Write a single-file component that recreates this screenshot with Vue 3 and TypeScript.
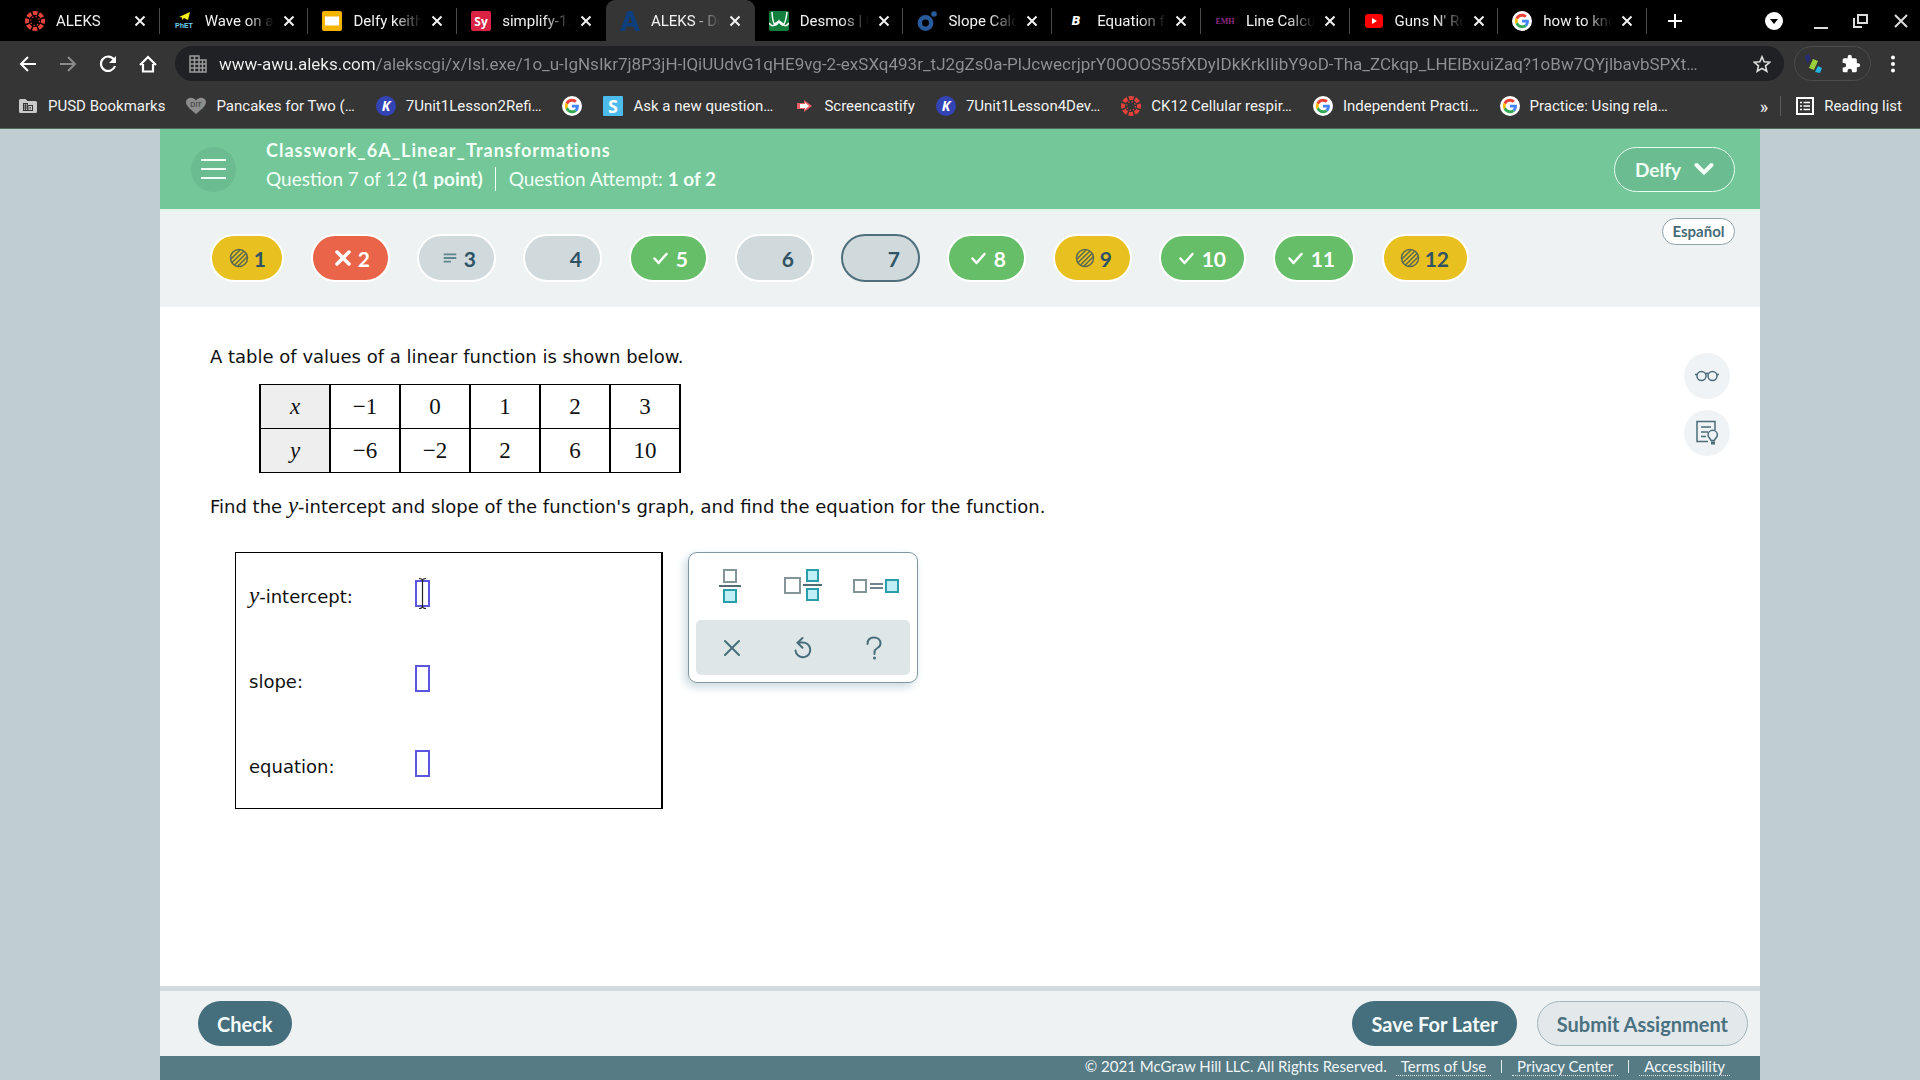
<script setup lang="ts">
import { ref } from 'vue'

interface Tab { icon: string; title: string; active?: boolean }
interface Bookmark { icon: string; title?: string }
type Status = 'partial' | 'wrong' | 'draft' | 'blank' | 'right' | 'current'
interface Question { n: number; status: Status; size: string }

const tabs: Tab[] = [
  { icon: 'canvas', title: 'ALEKS' },
  { icon: 'phet', title: 'Wave on a' },
  { icon: 'slides', title: 'Delfy keith' },
  { icon: 'sy', title: 'simplify-1.' },
  { icon: 'aleks', title: 'ALEKS - Do', active: true },
  { icon: 'desmos', title: 'Desmos | G' },
  { icon: 'omni', title: 'Slope Calc' },
  { icon: 'byjus', title: 'Equation f' },
  { icon: 'emh', title: 'Line Calcu' },
  { icon: 'youtube', title: "Guns N' Ro" },
  { icon: 'google', title: 'how to kno' },
]

const bookmarks: Bookmark[] = [
  { icon: 'folder', title: 'PUSD Bookmarks' },
  { icon: 'heart', title: 'Pancakes for Two (…' },
  { icon: 'kami', title: '7Unit1Lesson2Refi…' },
  { icon: 'google' },
  { icon: 'socratic', title: 'Ask a new question…' },
  { icon: 'screencastify', title: 'Screencastify' },
  { icon: 'kami', title: '7Unit1Lesson4Dev…' },
  { icon: 'canvas', title: 'CK12 Cellular respir…' },
  { icon: 'google', title: 'Independent Practi…' },
  { icon: 'google', title: 'Practice: Using rela…' },
]

const questions: Question[] = [
  { n: 1, status: 'partial', size: 'slim' },
  { n: 2, status: 'wrong', size: 'single' },
  { n: 3, status: 'draft', size: 'single' },
  { n: 4, status: 'blank', size: 'single' },
  { n: 5, status: 'right', size: 'single' },
  { n: 6, status: 'blank', size: 'single' },
  { n: 7, status: 'current', size: 'single' },
  { n: 8, status: 'right', size: 'single' },
  { n: 9, status: 'partial', size: 'single' },
  { n: 10, status: 'right', size: 'double' },
  { n: 11, status: 'right', size: 'medium' },
  { n: 12, status: 'partial', size: 'double' },
]

const rows = [
  { name: 'x', values: ['−1', '0', '1', '2', '3'] },
  { name: 'y', values: ['−6', '−2', '2', '6', '10'] },
]

const url = ref('www-awu.aleks.com/alekscgi/x/Isl.exe/1o_u-IgNsIkr7j8P3jH-lQiUUdvG1qHE9vg-2-exSXq493r_tJ2gZs0a-PlJcwecrjprY0OOOS55fXDyIDkKrkIIibY9oD-Tha_ZCkqp_LHElBxuiZaq?1oBw7QYjlbavbSPXt…')
const intercept = ref('')
const slope = ref('')
const equation = ref('')
</script>

<template>
  <svg class="sprite" aria-hidden="true">
    <symbol id="i-canvas" viewBox="0 0 20 20">
      <circle cx="10" cy="10" r="8" fill="none" stroke="#e3413a" stroke-width="4" stroke-dasharray="4.7 1.58" stroke-dashoffset="2.35" />
      <circle cx="10" cy="10" r="4.4" fill="none" stroke="#e3413a" stroke-width="1.4" stroke-dasharray="1.3 2.155" />
    </symbol>
    <symbol id="i-phet" viewBox="0 0 20 20">
      <path d="M5 6 16 1l-2 8-4-2-2 2V6.500z" fill="#f6ee1d" />
      <text x="1" y="17" font-family="Liberation Sans, sans-serif" font-size="7" font-weight="700" fill="#6fd0f5">PhET</text>
    </symbol>
    <symbol id="i-slides" viewBox="0 0 20 20">
      <rect width="20" height="20" rx="2" fill="#f4b400" /><rect x="3" y="5.500" width="14" height="9" fill="#fff" />
    </symbol>
    <symbol id="i-sy" viewBox="0 0 20 20">
      <rect width="20" height="20" rx="2" fill="#db2144" />
      <text x="10" y="14.500" text-anchor="middle" font-family="Open Sans, sans-serif" font-size="12" font-weight="700" fill="#fff">Sy</text>
    </symbol>
    <symbol id="i-aleks" viewBox="0 0 20 20">
      <path d="M0 20 7.500 0h5L20 20h-5l-1.500-4.500h-7L5 20zM8 12h4l-2-6.500z" fill="#0e3f7c" />
    </symbol>
    <symbol id="i-desmos" viewBox="0 0 20 20">
      <rect width="20" height="20" rx="2" fill="#12803c" />
      <path d="M0 12c3 4 5 3 7 0 2-2 4-2 6 0 2 3 4 4 7 0M3 1c1 17 5 14 7 9 2 5 6 8 8-9" fill="none" stroke="#fff" stroke-width="1.500" />
    </symbol>
    <symbol id="i-omni" viewBox="0 0 20 20">
      <circle cx="8.500" cy="12" r="5.700" fill="none" stroke="#285a9c" stroke-width="4.500" /><circle cx="17" cy="3" r="2.800" fill="#285a9c" />
    </symbol>
    <symbol id="i-byjus" viewBox="0 0 20 20">
      <text x="10" y="14" text-anchor="middle" font-family="DejaVu Sans, sans-serif" font-size="12" font-weight="700" font-style="italic" fill="#fff">B</text>
    </symbol>
    <symbol id="i-emh" viewBox="0 0 20 20">
      <text x="10" y="13" text-anchor="middle" font-family="Liberation Serif, serif" font-size="8" font-weight="700" fill="#8b2a80">EMH</text>
    </symbol>
    <symbol id="i-youtube" viewBox="0 0 20 20">
      <rect x="1" y="3" width="18" height="14" rx="3" fill="#f00" /><path d="M8 7v6l5-3z" fill="#fff" />
    </symbol>
    <symbol id="i-google" viewBox="0 0 20 20">
      <circle cx="10" cy="10" r="10" fill="#fff" />
      <g transform="translate(2.800 2.800) scale(.3)">
        <path fill="#ea4335" d="M24 9.500c3.540 0 6.710 1.220 9.210 3.600l6.850-6.850C35.900 2.380 30.470 0 24 0 14.620 0 6.510 5.380 2.560 13.220l7.980 6.190C12.430 13.720 17.740 9.500 24 9.500z" />
        <path fill="#4285f4" d="M46.980 24.550c0-1.570-.15-3.090-.38-4.550H24v9.020h12.940c-.58 2.960-2.260 5.480-4.780 7.180l7.730 6c4.510-4.180 7.090-10.360 7.090-17.650z" />
        <path fill="#fbbc05" d="M10.530 28.590c-.48-1.450-.76-2.990-.76-4.590s.27-3.140.76-4.590l-7.980-6.190C.92 16.460 0 20.120 0 24c0 3.880.92 7.540 2.560 10.780z" />
        <path fill="#34a853" d="M24 48c6.480 0 11.930-2.130 15.890-5.810l-7.730-6c-2.150 1.450-4.920 2.300-8.160 2.300-6.260 0-11.570-4.220-13.470-9.910l-7.980 6.190C6.510 42.620 14.620 48 24 48z" />
      </g>
    </symbol>
    <symbol id="i-folder" viewBox="0 0 20 20">
      <path d="M1 4.500A1.500 1.500 0 0 1 2.500 3h5l2 2h8A1.500 1.500 0 0 1 19 6.500v9a1.500 1.500 0 0 1-1.500 1.500h-15A1.500 1.500 0 0 1 1 15.500z" fill="#c9c9c9" />
      <path d="M5 7h5v2h5v6H5z" fill="#353535" />
      <path d="M6 8.200h1.200v1.200H6zM8 8.200h1.200v1.200H8zM6 10.400h1.200v1.200H6zM8 10.400h1.200v1.200H8zM6 12.600h1.200v1.200H6zM8 12.600h1.200v1.200H8zM10.500 10h3.500v4h-3.500z" fill="#c9c9c9" />
      <path d="M11.500 11h1.500v.8h-1.500zM11.500 12.500h1.500v.8h-1.500z" fill="#353535" />
    </symbol>
    <symbol id="i-heart" viewBox="0 0 20 20">
      <path d="M10 18C6 14.500 0 10.500 0 6c0-5 7.500-6 10-1.500C12.500 0 20 1 20 6c0 4.500-6 8.500-10 12z" fill="#8c8c8c" />
      <text x="10" y="10.500" text-anchor="middle" font-family="Liberation Sans, sans-serif" font-size="7" font-weight="700" fill="#4d4d4d">DIT</text>
    </symbol>
    <symbol id="i-kami" viewBox="0 0 20 20">
      <circle cx="10" cy="10" r="10" fill="#3444b4" />
      <text x="10" y="15" text-anchor="middle" font-family="Open Sans, sans-serif" font-size="14" font-weight="700" font-style="italic" fill="#fff">K</text>
    </symbol>
    <symbol id="i-socratic" viewBox="0 0 20 20">
      <rect width="20" height="20" rx="1" fill="#4cbcec" />
      <text x="10" y="16.500" text-anchor="middle" font-family="Open Sans, sans-serif" font-size="18" font-weight="700" fill="#fff">S</text>
    </symbol>
    <symbol id="i-screencastify" viewBox="0 0 20 20">
      <path d="M3 7h7V4l8 6-8 6v-3H3z" fill="#ef5f66" /><path d="M6 8h5V6.500l4 3.500-4 3.500V12H6z" fill="#fff" />
    </symbol>
    <symbol id="i-close" viewBox="0 0 12 12"><path d="m1.500 1.500 9 9m0-9-9 9" stroke="currentColor" stroke-width="2" /></symbol>
    <symbol id="i-partial" viewBox="0 0 20 20">
      <circle cx="10" cy="10" r="8.500" fill="none" stroke="#5b6a52" stroke-width="1.500" />
      <path d="m2 11 9-9M2.500 15 15 3M5 17.500 17.500 5M8.500 18.500l10-10" stroke="#5b6a52" stroke-width="1.500" />
    </symbol>
    <symbol id="i-wrong" viewBox="0 0 20 20"><path d="m4 4 12 12m0-12L4 16" stroke="#fff" stroke-width="3.500" stroke-linecap="round" /></symbol>
    <symbol id="i-draft" viewBox="0 0 20 20"><path d="M3 6h14M3 10h14M3 14h8" stroke="#5f8790" stroke-width="2" /></symbol>
    <symbol id="i-right" viewBox="0 0 20 20"><path d="m3.500 10.500 4 4.500 8-9" fill="none" stroke="#fff" stroke-width="2.500" stroke-linecap="round" stroke-linejoin="round" /></symbol>
  </svg>

  <div class="window">
    <header class="chrome">
      <div class="strip">
        <nav class="tabs" aria-label="Tabs">
          <div v-for="(t, i) in tabs" :key="i" class="tab" :class="{ active: t.active, before: tabs[i + 1]?.active }">
            <svg class="fav"><use :href="'#i-' + t.icon" /></svg>
            <span class="tab-title">{{ t.title }}</span>
            <button class="tab-close" aria-label="Close tab"><svg><use href="#i-close" /></svg></button>
          </div>
        </nav>
        <div class="controls">
          <button class="plus" aria-label="New tab"><svg width="16" height="16" viewBox="0 0 16 16"><path d="M8 1v14M1 8h14" stroke="#fff" stroke-width="2" /></svg></button>
          <button class="search" aria-label="Search tabs"><svg width="18" height="18" viewBox="0 0 18 18"><circle cx="9" cy="9" r="9" fill="#fff" /><path d="M5 7h8l-4 5z" fill="#000" /></svg></button>
          <button aria-label="Minimize"><svg width="16" height="16" viewBox="0 0 16 16"><path d="M1 15h14" stroke="#ddd" stroke-width="2" /></svg></button>
          <button aria-label="Restore"><svg width="16" height="16" viewBox="0 0 16 16"><path d="M5 2h9v8H5zM1 5v9h8" fill="none" stroke="#ddd" stroke-width="2" /></svg></button>
          <button aria-label="Close window"><svg width="16" height="16" viewBox="0 0 16 16"><path d="m2 2 12 12m0-12L2 14" stroke="#ddd" stroke-width="2" /></svg></button>
        </div>
      </div>

      <div class="toolbar">
        <button class="tool" aria-label="Back"><svg viewBox="0 0 20 20"><path d="M18 10H3m7-7-7 7 7 7" fill="none" stroke="#fff" stroke-width="2" /></svg></button>
        <button class="tool" aria-label="Forward"><svg viewBox="0 0 20 20"><path d="M2 10h15m-7-7 7 7-7 7" fill="none" stroke="#8a8a8a" stroke-width="2" /></svg></button>
        <button class="tool" aria-label="Reload"><svg viewBox="0 0 20 20"><path d="M16 5.500A7.200 7.200 0 1 0 17 12" fill="none" stroke="#fff" stroke-width="2.200" /><path d="M18 2v7h-7z" fill="#fff" /></svg></button>
        <button class="tool" aria-label="Home"><svg viewBox="0 0 20 20"><path d="M2 11 10 3l8 8m-13-1v7.500h10V10" fill="none" stroke="#fff" stroke-width="2.200" /></svg></button>
        <label class="address">
          <svg width="18" height="18" viewBox="0 0 18 18"><path d="M1 1h9v4h7v12H1z" fill="none" stroke="#9a9a9a" stroke-width="1.500" /><path d="M1 5h9M1 9h16M1 13h16M5.500 1v16M10 5v12M13.500 5v12" stroke="#9a9a9a" stroke-width="1.500" /></svg>
          <input v-model="url" class="url" type="text" aria-label="Address" spellcheck="false">
          <svg width="18" height="18" viewBox="0 0 20 20"><path d="m10 2 2.400 5.600 6.100.500-4.600 4 1.400 6L10 14.900l-5.300 3.200 1.400-6-4.600-4 6.100-.500z" fill="none" stroke="#ddd" stroke-width="1.800" /></svg>
        </label>
        <div class="extensions">
          <svg width="20" height="20" viewBox="0 0 20 20"><path d="m1 2 4-2 2 5-4 5z" fill="#2a2d74" /><path d="m9 5 5 2-4 9-5-2z" fill="#9bcf3c" /><path d="m14 12 4 2-2 5-5-1z" fill="#23b3e0" /></svg>
          <svg width="20" height="20" viewBox="0 0 24 24"><path fill="#fff" d="M20.500 11H19V7a2 2 0 0 0-2-2h-4V3.500a2.500 2.500 0 0 0-5 0V5H4a2 2 0 0 0-2 2v3.800h1.500a2.700 2.700 0 0 1 0 5.400H2V20a2 2 0 0 0 2 2h3.800v-1.500a2.700 2.700 0 0 1 5.400 0V22H17a2 2 0 0 0 2-2v-4h1.500a2.500 2.500 0 0 0 0-5z" /></svg>
        </div>
        <button class="more" aria-label="Menu"><svg width="20" height="20" viewBox="0 0 20 20" fill="#fff"><circle cx="10" cy="3.500" r="2" /><circle cx="10" cy="10" r="2" /><circle cx="10" cy="16.500" r="2" /></svg></button>
      </div>

      <nav class="bookmarks" aria-label="Bookmarks">
        <a v-for="(b, i) in bookmarks" :key="i" href="#" :aria-label="b.title ?? 'Google'">
          <svg class="fav"><use :href="'#i-' + b.icon" /></svg><span v-if="b.title">{{ b.title }}</span>
        </a>
        <span class="overflow">»</span>
        <a href="#" class="reading">
          <svg width="18" height="18" viewBox="0 0 18 18"><rect x="1" y="1" width="16" height="16" fill="none" stroke="#fff" stroke-width="2" /><path d="M4 5.500h2M4 9h2M4 12.500h2M7.500 5.500H14M7.500 9H14M7.500 12.500H14" stroke="#fff" stroke-width="1.600" /></svg>
          <span>Reading list</span>
        </a>
      </nav>
    </header>

    <main class="app">
      <header class="banner">
        <button class="menu" aria-label="Open menu"><i /><i /><i /></button>
        <div class="heading">
          <h1>Classwork_6A_Linear_Transformations</h1>
          <p><span>Question 7 of 12 <b>(1 point)</b></span><span class="attempt">Question Attempt: <b>1 of 2</b></span></p>
        </div>
        <button class="user">Delfy
          <svg width="20" height="14" viewBox="0 0 20 14"><path d="m2.500 3 7.500 7.500L17.500 3" fill="none" stroke="#f2fff7" stroke-width="4" stroke-linecap="round" /></svg>
        </button>
      </header>

      <nav class="questions" aria-label="Questions">
        <button v-for="q in questions" :key="q.n" class="pill" :class="[q.status, q.size]">
          <svg v-if="q.status !== 'blank' && q.status !== 'current'"><use :href="'#i-' + q.status" /></svg>
          <span>{{ q.n }}</span>
        </button>
        <button class="language">Español</button>
      </nav>

      <section class="content">
        <div class="problem">
          <p>A table of values of a linear function is shown below.</p>
          <table>
            <tbody>
              <tr v-for="r in rows" :key="r.name">
                <th scope="row">{{ r.name }}</th>
                <td v-for="(v, i) in r.values" :key="i">{{ v }}</td>
              </tr>
            </tbody>
          </table>
          <p>Find the <em>y</em>-intercept and slope of the function's graph, and find the equation for the function.</p>
          <div class="work">
            <form class="answers" @submit.prevent>
              <div class="answer">
                <label for="intercept"><em>y</em>-intercept:</label>
                <span class="slot">
                  <input id="intercept" v-model="intercept" type="text">
                  <svg class="ibeam" width="9" height="33" viewBox="0 0 9 33"><path d="M1 1.500c2 0 3.500.5 3.500 2.500v25c0 2-1.500 2.500-3.500 2.500M8 1.500c-2 0-3.500.5-3.500 2.500v25c0 2 1.500 2.500 3.500 2.500" fill="none" stroke="#222" stroke-width="1.200" /></svg>
                </span>
              </div>
              <div class="answer">
                <label for="slope">slope:</label>
                <span class="slot"><input id="slope" v-model="slope" type="text"></span>
              </div>
              <div class="answer">
                <label for="equation">equation:</label>
                <span class="slot"><input id="equation" v-model="equation" type="text"></span>
              </div>
            </form>

            <div class="palette">
              <div class="templates">
                <button aria-label="Fraction"><svg width="22" height="34" viewBox="0 0 22 34"><rect x="5" y="1" width="12" height="12" fill="#fff" stroke="#84959a" stroke-width="2" /><path d="M0 17h22" stroke="#536c74" stroke-width="2" /><rect x="5" y="21" width="12" height="12" fill="#c0f0f5" stroke="#2a9dab" stroke-width="2" /></svg></button>
                <button aria-label="Mixed number"><svg width="38" height="34" viewBox="0 0 38 34"><rect x="1" y="9" width="15" height="15" fill="#fff" stroke="#84959a" stroke-width="2" /><path d="M19 16h19" stroke="#536c74" stroke-width="2" /><rect x="23" y="1" width="11" height="11" fill="#c0f0f5" stroke="#2a9dab" stroke-width="2" /><rect x="23" y="20" width="11" height="11" fill="#c0f0f5" stroke="#2a9dab" stroke-width="2" /></svg></button>
                <button aria-label="Equation"><svg width="46" height="34" viewBox="0 0 46 34"><rect x="1" y="11" width="12" height="12" fill="#fff" stroke="#84959a" stroke-width="2" /><path d="M17 15h13M17 19h13" stroke="#6f858c" stroke-width="2" /><rect x="33" y="11" width="12" height="12" fill="#c0f0f5" stroke="#2a9dab" stroke-width="2" /></svg></button>
              </div>
              <div class="actions">
                <button aria-label="Clear"><svg width="16" height="24" viewBox="0 0 16 24"><path d="m1 5 14 14m0-14L1 19" stroke="#466d7c" stroke-width="2" stroke-linecap="round" /></svg></button>
                <button aria-label="Undo"><svg width="18" height="24" viewBox="0 0 18 24"><path d="M1.500 14.500a7.400 7.400 0 1 0 6.500-8H3.500M8.500 2 3.500 6.700l5 5" fill="none" stroke="#466d7c" stroke-width="2" stroke-linecap="round" /></svg></button>
                <button aria-label="Help"><svg width="16" height="24" viewBox="0 0 16 24"><path d="M1.500 8C1.500 3.500 4.500 1.500 8 1.500s6.500 2 6.500 6c0 5-6 4-6 8.500v2" fill="none" stroke="#466d7c" stroke-width="2" stroke-linecap="round" /><circle cx="8.500" cy="22" r="1.500" fill="#466d7c" /></svg></button>
              </div>
            </div>
          </div>
        </div>

        <aside class="tools">
          <button aria-label="Reading view"><svg width="24" height="24" viewBox="0 0 24 24" fill="none" stroke="#4b6d7a" stroke-width="1.500"><circle cx="6.500" cy="12" r="4.500" /><circle cx="17.500" cy="12" r="4.500" /><path d="M0 10.500h2.500m19 0H24M10.500 10c1-1 2-1 3 0" /></svg></button>
          <button aria-label="Dictionary"><svg width="24" height="26" viewBox="0 0 24 26" fill="none" stroke="#4b6d7a" stroke-width="1.500"><path d="M20 10V1.500H2v20h11M6 7h10M6 12h7M6 16.500h5" /><path d="M16 20.500c0-2-3-2.500-3-5.500a4.700 4.700 0 0 1 9.400 0c0 3-3 3.500-3 5.500z" /><path d="M16 23h4" stroke-width="3" /></svg></button>
        </aside>
      </section>

      <footer class="foot">
        <div class="submit">
          <button class="solid">Check</button>
          <button class="solid save">Save For Later</button>
          <button class="ghost">Submit Assignment</button>
        </div>
        <div class="legal">
          <span>© 2021 McGraw Hill LLC. All Rights Reserved.</span>
          <a href="#">Terms of Use</a><i /><a href="#">Privacy Center</a><i /><a href="#">Accessibility</a>
        </div>
      </footer>
    </main>
  </div>
</template>

<style>
body { background: #c0cdd3; }
</style>

<style scoped>
* { box-sizing: border-box; }
button { border: 0; background: none; padding: 0; font: inherit; color: inherit; display: flex; align-items: center; justify-content: center; cursor: pointer; }
a { color: inherit; text-decoration: none; }
svg { display: block; flex: none; }
.sprite { display: none; }
.window { min-height: 100vh; display: flex; flex-direction: column; }

.chrome { background: #353535; color: #f2f2f2; font-family: Roboto, sans-serif; font-size: 15px; border-bottom: 1px solid #4d6a5a; }
.strip { display: flex; height: 41px; background: #000; padding-left: 11px; }
.tabs { flex: 1; display: flex; min-width: 0; }
.tab { position: relative; flex: 1 1 0; min-width: 0; display: flex; align-items: center; padding-left: 14px; }
.tab::after { content: ''; position: absolute; right: 0; top: 8px; width: 1px; height: 26px; background: #4a4a4a; }
.tab.active { background: #353535; border-radius: 9px 9px 0 0; }
.tab.active::after, .tab.before::after { display: none; }
.fav { width: 20px; height: 20px; }
.tab-title { width: 69px; margin: 0 7px 0 11px; overflow: hidden; white-space: nowrap; mask-image: linear-gradient(90deg, #000 60%, transparent); }
.tab-close { width: 16px; height: 20px; }
.tab-close svg { width: 12px; height: 12px; }
.controls { display: flex; align-items: center; width: 273px; padding-right: 11px; gap: 24px; }
.plus { margin: 0 auto 0 20px; }
.search { margin-right: 6px; }

.toolbar { display: flex; align-items: center; height: 45px; padding: 0 17px 0 18px; }
.tool { width: 20px; height: 20px; margin-right: 20px; }
.tool svg { width: 20px; height: 20px; }
.address { flex: 1; min-width: 0; display: flex; align-items: center; gap: 12px; height: 35px; margin: 0 10px 0 -3px; padding: 0 13px 0 14px; border-radius: 18px; background: #202124; }
.url { flex: 1; min-width: 0; border: 0; outline: 0; padding: 0; font: 17px Roboto, sans-serif; color: transparent; background: linear-gradient(90deg, #f2f2f2 157px, #8f9093 157px); background-clip: text; -webkit-background-clip: text; }
.extensions { display: flex; align-items: center; gap: 17px; height: 35px; padding: 0 9px; border: 1px solid #4a4c50; border-radius: 18px; }
.more { margin-left: 12px; }

.bookmarks { display: flex; align-items: center; gap: 21px; height: 42px; padding: 0 18px 2px 18px; white-space: nowrap; }
.bookmarks a { display: flex; align-items: center; gap: 10px; }
.overflow { margin-left: auto; margin-right: -9px; font-size: 18px; }
.bookmarks .reading { padding-left: 15px; border-left: 1px solid #5c5c5c; height: 20px; }

.app { flex: 1; display: flex; flex-direction: column; width: calc(100% - 320px); margin: 0 auto; background: #fff; font-family: Lato, sans-serif; }
.banner { display: flex; align-items: center; height: 82px; padding: 0 25px 0 31px; background: #73c798; border-bottom: 2px solid #dff7ea; color: #f2fff7; }
.menu { flex-direction: column; gap: 7px; width: 45px; height: 45px; border-radius: 50%; background: #6bbc91; }
.menu i { width: 25px; height: 2px; background: #f2fff7; }
.heading { margin: 0 0 9px 30px; }
.heading h1 { margin: 0; font-size: 18px; line-height: 22px; font-weight: 700; letter-spacing: 1px; }
.heading p { margin: 6px 0 0; display: flex; font-size: 19px; line-height: 24px; }
.attempt { margin-left: 12px; padding-left: 13px; border-left: 1px solid #f2fff7; }
.user { margin-left: auto; gap: 13px; width: 121px; height: 45px; border: 1px solid #e6fff0; border-radius: 23px; background: #6bbc91; font-size: 19px; font-weight: 700; }

.questions { display: flex; gap: 27px; height: 96px; padding: 23px 25px 0 50px; background: #eef2f3; }
.pill { justify-content: flex-end; height: 48px; padding-right: 18px; gap: 5px; border: 2px solid #fff; border-radius: 24px; font-size: 21px; font-weight: 700; color: #2f5365; background: #d0d9dc; }
.pill svg { width: 20px; height: 20px; }
.slim { width: 74px; padding-right: 16px; }
.single { width: 79px; }
.medium { width: 82px; }
.double { width: 87px; }
.partial { background: #e8c01f; }
.wrong { background: #e96449; color: #fff; }
.right { background: #67be69; color: #fff; }
.current { border-color: #4f6f7c; }
.draft svg { width: 18px; height: 18px; }
.language { margin: -16px 0 0 auto; width: 73px; height: 27px; padding-bottom: 2px; border: 1px solid #8ea3ab; border-radius: 14px; background: #fff; color: #466b78; font-size: 15px; font-weight: 700; }

.content { flex: 1; display: flex; justify-content: space-between; padding: 38px 30px 40px 50px; }
.problem { font-family: "DejaVu Sans", sans-serif; font-size: 18px; color: #111; }
.problem p { margin: 0; line-height: 24px; }
em { font: italic 23px/20px "Liberation Serif", serif; }
table { margin: 15px 0 22px 49px; border-collapse: collapse; font: 23px "Liberation Serif", serif; }
th, td { width: 70px; height: 44px; padding: 0; border: solid #000; border-width: 1px 2px; text-align: center; }
th { background: #eee; font-style: italic; font-weight: 400; }
.work { display: flex; align-items: flex-start; gap: 25px; margin: 33px 0 0 25px; }
.answers { width: 428px; padding: 27px 0 31px 13px; display: flex; flex-direction: column; gap: 58px; border: solid #000; border-width: 1px 2px 1px 1px; }
.answer { display: flex; align-items: center; height: 27px; }
.answer label { width: 166px; padding-top: 6px; line-height: 24px; }
.slot { position: relative; display: flex; }
.slot input { width: 15px; height: 27px; padding: 0; border: 2px solid #5b55e0; outline: 0; }
.ibeam { position: absolute; left: 3px; top: -3px; pointer-events: none; }
.palette { width: 230px; height: 131px; padding: 14px 7px 7px; border: 1px solid #7f979f; border-radius: 9px; box-shadow: -3px 4px 10px #c9d8df; }
.templates, .actions { display: grid; grid-template-columns: 1fr 1fr 1fr; }
.templates { height: 53px; margin: 0 -3px; align-items: start; padding-top: 2px; }
.actions { height: 55px; border-radius: 5px; background: #dfe6e7; }
.tools { display: flex; flex-direction: column; gap: 11px; padding-top: 8px; }
.tools button { width: 46px; height: 46px; border-radius: 50%; background: #eff3f5; }

.submit { display: flex; align-items: center; gap: 20px; height: 70px; padding: 0 12px 0 38px; border-top: 5px solid #d1dadc; background: #eef2f3; }
.submit button { height: 45px; padding: 0 19px; border-radius: 23px; font-size: 20px; font-weight: 700; }
.solid { background: #466f7d; color: #f4fbfc; }
.save { margin-left: auto; }
.submit .ghost { border: 1px solid #a3b5bb; background: #e3e8eb; color: #4a7180; }
.legal { display: flex; justify-content: flex-end; align-items: flex-start; height: 24px; padding: 0 30px 0 0; background: #567b85; color: #f0f6f7; font-size: 15px; line-height: 21px; }
.legal span { margin-right: 9px; }
.legal a { padding: 0 5px; height: 20px; border-bottom: 1px dotted #dce6e8; }
.legal i { width: 1px; height: 13px; margin: 4px 10px 0; background: #e3ecee; }
</style>
